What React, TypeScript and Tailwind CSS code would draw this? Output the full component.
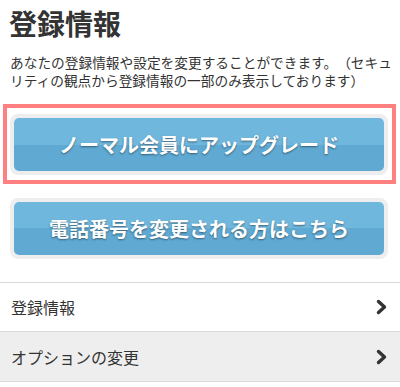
import React from "react";

function Chevron() {
  return (
    <svg width="11" height="16" viewBox="0 0 11 16" className="shrink-0">
      <polyline points="2.5,2.5 8.5,8 2.5,13.5" fill="none" stroke="#333" strokeWidth="3.4" strokeLinecap="round" strokeLinejoin="round" />
    </svg>
  );
}

function BlueButton({ label }: { label: string }) {
  return (
    <div className="rounded-[8px] border-4 border-[#eeeeee] bg-[#eeeeee]">
      <div className="flex h-[53px] items-center justify-center rounded-[5px] bg-[linear-gradient(to_bottom,#70b7dd_0%,#70b7dd_50%,#5fa9d2_50%,#5fa9d2_100%)] text-[20px] font-bold text-white [text-shadow:0_1px_2px_rgba(0,0,0,0.45)]">
        {label}
      </div>
    </div>
  );
}

export default function App() {
  return (
    <div className="w-[400px] h-[387px] overflow-hidden bg-white text-[#333] [font-family:'Noto_Sans_CJK_JP','Noto_Sans',sans-serif] [text-spacing-trim:space-all]">
      <h1 className="pl-[9px] pt-[5px] text-[28px] font-bold leading-[36px]">登録情報</h1>
      <p className="mt-[12px] pl-[10px] text-[13.7px] leading-[18px] whitespace-nowrap">
        あなたの登録情報や設定を変更することができます。（セキュ
        <br />
        リティの観点から登録情報の一部のみ表示しております）
      </p>
      <div className="ml-[3px] mt-[15px] w-[393px] border-4 border-[#ff8080] pl-[3px] pr-[4px] pt-[6px] pb-[5px]">
        <BlueButton label="ノーマル会員にアップグレード" />
      </div>
      <div className="mt-[14px] ml-[10px] w-[378px]">
        <BlueButton label="電話番号を変更される方はこちら" />
      </div>
      <div className="mt-[23px] border-t border-[#d9d9d9]">
        <div className="flex h-[49px] items-center justify-between border-b border-[#d9d9d9] pl-[11px] pr-[13px] text-[16px]">
          <span>登録情報</span>
          <Chevron />
        </div>
        <div className="flex h-[50px] items-center justify-between border-b border-[#d9d9d9] bg-[#eeeeee] pl-[11px] pr-[13px] text-[16px]">
          <span>オプションの変更</span>
          <Chevron />
        </div>
      </div>
    </div>
  );
}
